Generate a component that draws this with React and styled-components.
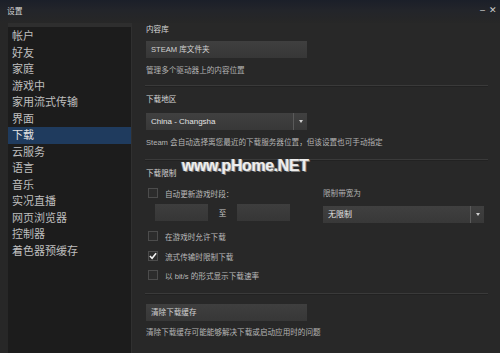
import React from 'react';
import styled, { createGlobalStyle } from 'styled-components';

const GlobalStyle = createGlobalStyle`
  html, body {
    margin: 0;
    padding: 0;
    background: #262626;
    overflow: hidden;
  }
  * { box-sizing: border-box; }
`;

const FONT = `"Liberation Sans", "Noto Sans CJK SC", sans-serif`;

const Window = styled.div`
  position: relative;
  width: 500px;
  height: 353px;
  display: flex;
  flex-direction: column;
  background: #272727;
  font-family: ${FONT};
  color: #bdbdbd;
  overflow: hidden;
`;

const TitleBar = styled.div`
  height: 23px;
  flex: none;
  display: flex;
  align-items: center;
  justify-content: space-between;
  padding: 0 3px 2px 7px;
  background: linear-gradient(#1b1f29 0%, #23252a 45%, #272727 100%);
`;

const Title = styled.span`
  font-size: 7.8px;
  color: #d4d4d4;
`;

const Controls = styled.div`
  display: flex;
  align-items: center;
  gap: 4px;
  color: #cfcfcf;
  font-size: 9px;
  margin-top: -2px;
`;

const Body = styled.div`
  flex: 1;
  display: flex;
  padding-left: 8px;
`;

const Sidebar = styled.div`
  width: 124px;
  flex: none;
  background: #1c1c1c;
  border-top: 4px solid #2e2e2e;
  border-right: 1px solid #303030;
  padding-top: 1px;
`;

const NavItem = styled.div`
  height: 16.5px;
  line-height: 16.5px;
  padding-left: 4px;
  font-size: 11px;
  color: ${p => (p.$active ? '#e2e2e2' : '#bfbfbf')};
  background: ${p => (p.$active ? '#1f3b5e' : 'transparent')};
  white-space: nowrap;
`;

const Content = styled.div`
  flex: 1;
  padding: 1.5px 13px 0 14px;
  background: #282828;
`;

const Label = styled.div`
  height: 10px;
  line-height: 10px;
  font-size: 7.6px;
  color: ${p => (p.$dim ? '#b4b4b4' : '#d8d8d8')};
  margin-top: ${p => p.$mt || 0}px;
  white-space: nowrap;
`;

const Button = styled.div`
  width: 161px;
  height: 17px;
  line-height: 17px;
  padding-left: 5px;
  margin-top: ${p => p.$mt || 0}px;
  font-size: 7.6px;
  color: #d2d2d2;
  background: linear-gradient(#3f3f3f, #373737);
`;

const Dropdown = styled.div`
  position: relative;
  width: 161px;
  height: 17px;
  line-height: 17px;
  padding-left: 5px;
  margin-top: ${p => p.$mt || 0}px;
  font-size: 8px;
  color: #e4e4e4;
  background: linear-gradient(#404040, #383838);
`;

const DropArrow = styled.div`
  position: absolute;
  right: 0;
  top: 0;
  width: 14px;
  height: 17px;
  border-left: 1px solid #5a5a5a;
  display: flex;
  align-items: center;
  justify-content: center;
  &::after {
    content: '';
    border-left: 2.5px solid transparent;
    border-right: 2.5px solid transparent;
    border-top: 3px solid #cfcfcf;
  }
`;

const Separator = styled.div`
  height: 1px;
  margin: ${p => p.$mt || 0}px -1px 0 -1px;
  background: #3a3a3a;
  box-shadow: 0 1px 0 #222;
`;

const LimitRow = styled.div`
  display: flex;
  margin-top: 9px;
`;

const LimitLeft = styled.div`
  width: 177px;
  flex: none;
`;

const LimitRight = styled.div`
  padding-top: 1px;
`;

const CheckRow = styled.div`
  display: flex;
  align-items: center;
  gap: 7px;
  padding-left: 2px;
  height: 10px;
  margin-top: ${p => p.$mt || 0}px;
  font-size: 7.6px;
  color: #bababa;
  white-space: nowrap;
`;

const Box = styled.div`
  width: 10px;
  height: 10px;
  flex: none;
  border: 1px solid #4c4c4c;
  background: #2c2c2c;
  display: flex;
  align-items: center;
  justify-content: center;
`;

const TimeRow = styled.div`
  display: flex;
  align-items: center;
  padding-left: 9px;
  margin-top: 6px;
  font-size: 7.6px;
  color: #c8c8c8;
`;

const TimeInput = styled.div`
  width: 53px;
  height: 17px;
  background: linear-gradient(#3e3e3e, #363636);
`;

const To = styled.span`
  width: 29px;
  text-align: center;
`;

const Watermark = styled.div`
  position: absolute;
  left: 182px;
  top: 157px;
  font-family: "Liberation Sans", sans-serif;
  font-weight: bold;
  font-size: 16px;
  letter-spacing: -0.4px;
  color: #eeeeee;
  text-shadow: 1px 1px 0 #808080, -1px 0 0 #9a9a9a;
  pointer-events: none;
`;

const Check = () => (
  <svg width="9" height="8" viewBox="0 0 9 8">
    <polyline points="1,4 3.5,6.5 8,1" fill="none" stroke="#f2f2f2" strokeWidth="1.8" />
  </svg>
);

const Checkbox = ({ checked, children, mt }) => (
  <CheckRow $mt={mt}>
    <Box>{checked && <Check />}</Box>
    <span>{children}</span>
  </CheckRow>
);

const navItems = [
  '帐户', '好友', '家庭', '游戏中', '家用流式传输', '界面', '下载',
  '云服务', '语言', '音乐', '实况直播', '网页浏览器', '控制器', '着色器预缓存',
];

export default function App() {
  return (
    <Window>
      <GlobalStyle />
      <TitleBar>
        <Title>设置</Title>
        <Controls>
          <span>–</span>
          <span>✕</span>
        </Controls>
      </TitleBar>
      <Body>
        <Sidebar>
          {navItems.map(item => (
            <NavItem key={item} $active={item === '下载'}>{item}</NavItem>
          ))}
        </Sidebar>
        <Content>
          <Label>内容库</Label>
          <Button $mt={6.5}>STEAM 库文件夹</Button>
          <Label $dim $mt={8}>管理多个驱动器上的内容位置</Label>
          <Separator $mt={9} />

          <Label $mt={9}>下载地区</Label>
          <Dropdown $mt={8}>
            China - Changsha
            <DropArrow />
          </Dropdown>
          <Label $dim $mt={8}>Steam 会自动选择离您最近的下载服务器位置，但该设置也可手动指定</Label>
          <Separator $mt={11} />

          <Label $mt={9}>下载限制</Label>
          <LimitRow>
            <LimitLeft>
              <Checkbox>自动更新游戏时段：</Checkbox>
              <TimeRow>
                <TimeInput />
                <To>至</To>
                <TimeInput />
              </TimeRow>
            </LimitLeft>
            <LimitRight>
              <Label $dim>限制带宽为</Label>
              <Dropdown $mt={7}>
                无限制
                <DropArrow />
              </Dropdown>
            </LimitRight>
          </LimitRow>
          <Checkbox mt={8}>在游戏时允许下载</Checkbox>
          <Checkbox checked mt={10}>流式传输时限制下载</Checkbox>
          <Checkbox mt={9}>以 bit/s 的形式显示下载速率</Checkbox>
          <Separator $mt={13} />

          <Button $mt={10}>清除下载缓存</Button>
          <Label $dim $mt={7}>清除下载缓存可能能够解决下载或启动应用时的问题</Label>
        </Content>
      </Body>
      <Watermark>www.pHome.NET</Watermark>
    </Window>
  );
}
